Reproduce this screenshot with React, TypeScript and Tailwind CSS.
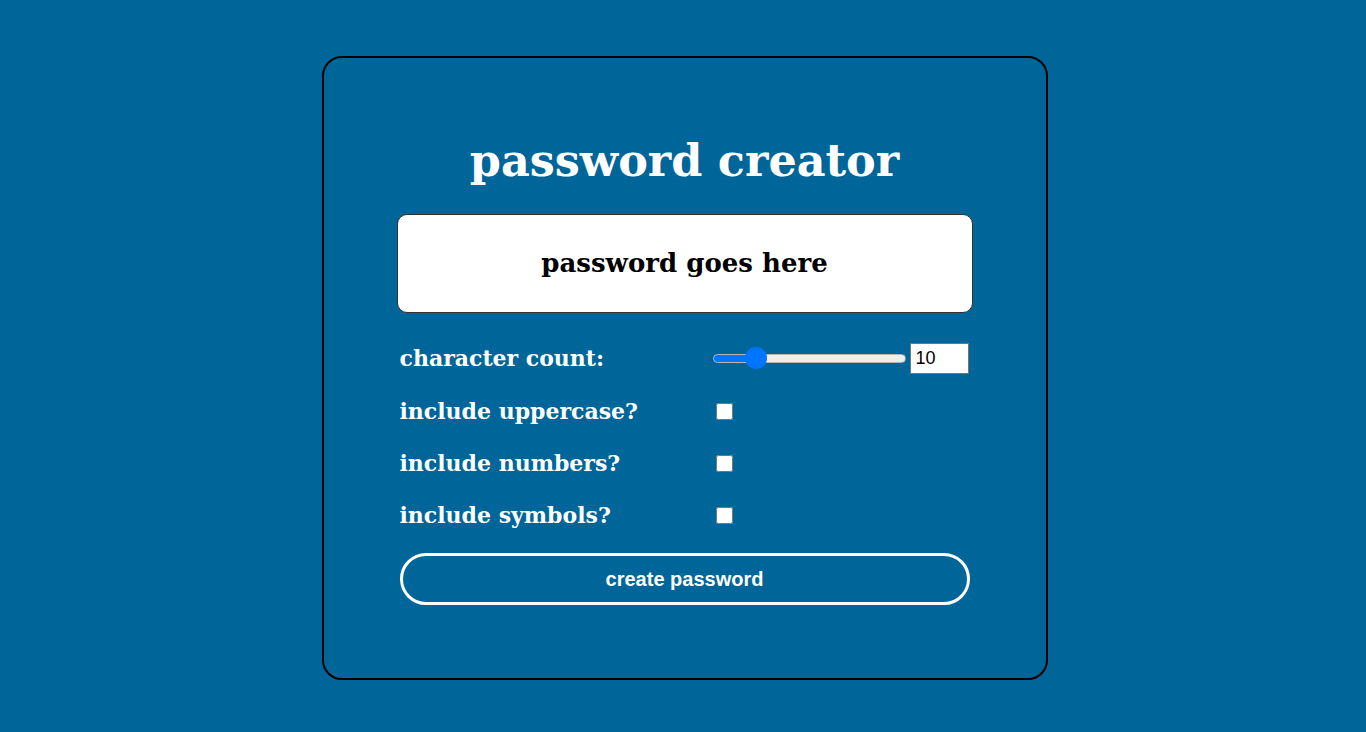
import { useState } from 'react'

const serif = "font-['DejaVu_Serif',Georgia,serif]"
const sans = "font-['Liberation_Sans',Arial,sans-serif]"

export default function App() {
  const [count, setCount] = useState(10)
  const [upper, setUpper] = useState(false)
  const [numbers, setNumbers] = useState(false)
  const [symbols, setSymbols] = useState(false)

  const options = [
    { label: 'include uppercase?', value: upper, set: setUpper },
    { label: 'include numbers?', value: numbers, set: setNumbers },
    { label: 'include symbols?', value: symbols, set: setSymbols },
  ]

  // filled part of the slider track
  const pct = ((count - 1) / 49) * 100

  return (
    <div className="flex min-h-screen w-full justify-center bg-[#006699] pt-[56px] pl-[3px]">
      <div className={`flex h-[624px] w-[726px] flex-col items-center rounded-[20px] border-2 border-black ${serif}`}>
        <h1 className="mt-[72px] text-[44.5px] font-bold leading-[60px] text-white">password creator</h1>

        <div className="mt-[24px] flex h-[99px] w-[576px] items-center justify-center rounded-[10px] border border-[#333] bg-white">
          <p className="text-[26px] font-bold text-black">password goes here</p>
        </div>

        <div className="mt-[18px] w-[570px]">
          <div className="grid h-[54px] grid-cols-[313px_1fr] items-center">
            <label className="text-[22px] font-bold text-white">character count:</label>
            <div className="flex items-center gap-[4px]">
              <input
                type="range"
                min={1}
                max={50}
                value={count}
                onChange={e => setCount(Number(e.target.value))}
                style={{ background: `linear-gradient(to right, #0075ff ${pct}%, #efefef ${pct}%)` }}
                className="h-[9px] w-[193px] appearance-none rounded-full border border-[#b5b5b5] [&::-webkit-slider-thumb]:h-[22px] [&::-webkit-slider-thumb]:w-[22px] [&::-webkit-slider-thumb]:appearance-none [&::-webkit-slider-thumb]:rounded-full [&::-webkit-slider-thumb]:bg-[#0075ff]"
              />
              <input
                type="number"
                value={count}
                onChange={e => setCount(Number(e.target.value))}
                className={`h-[31px] w-[59px] border border-[#767676] bg-white px-[5px] text-[18px] text-black ${sans}`}
              />
            </div>
          </div>

          {options.map(o => (
            <div key={o.label} className="grid h-[52px] grid-cols-[313px_1fr] items-center">
              <label className="text-[22px] font-bold text-white">{o.label}</label>
              <input
                type="checkbox"
                checked={o.value}
                onChange={e => o.set(e.target.checked)}
                className="ml-[3px] h-[17px] w-[17px]"
              />
            </div>
          ))}

          <button className={`mt-[12px] h-[52px] w-full rounded-full border-[3px] border-white text-[20px] font-bold text-white ${sans}`}>
            create password
          </button>
        </div>
      </div>
    </div>
  )
}
